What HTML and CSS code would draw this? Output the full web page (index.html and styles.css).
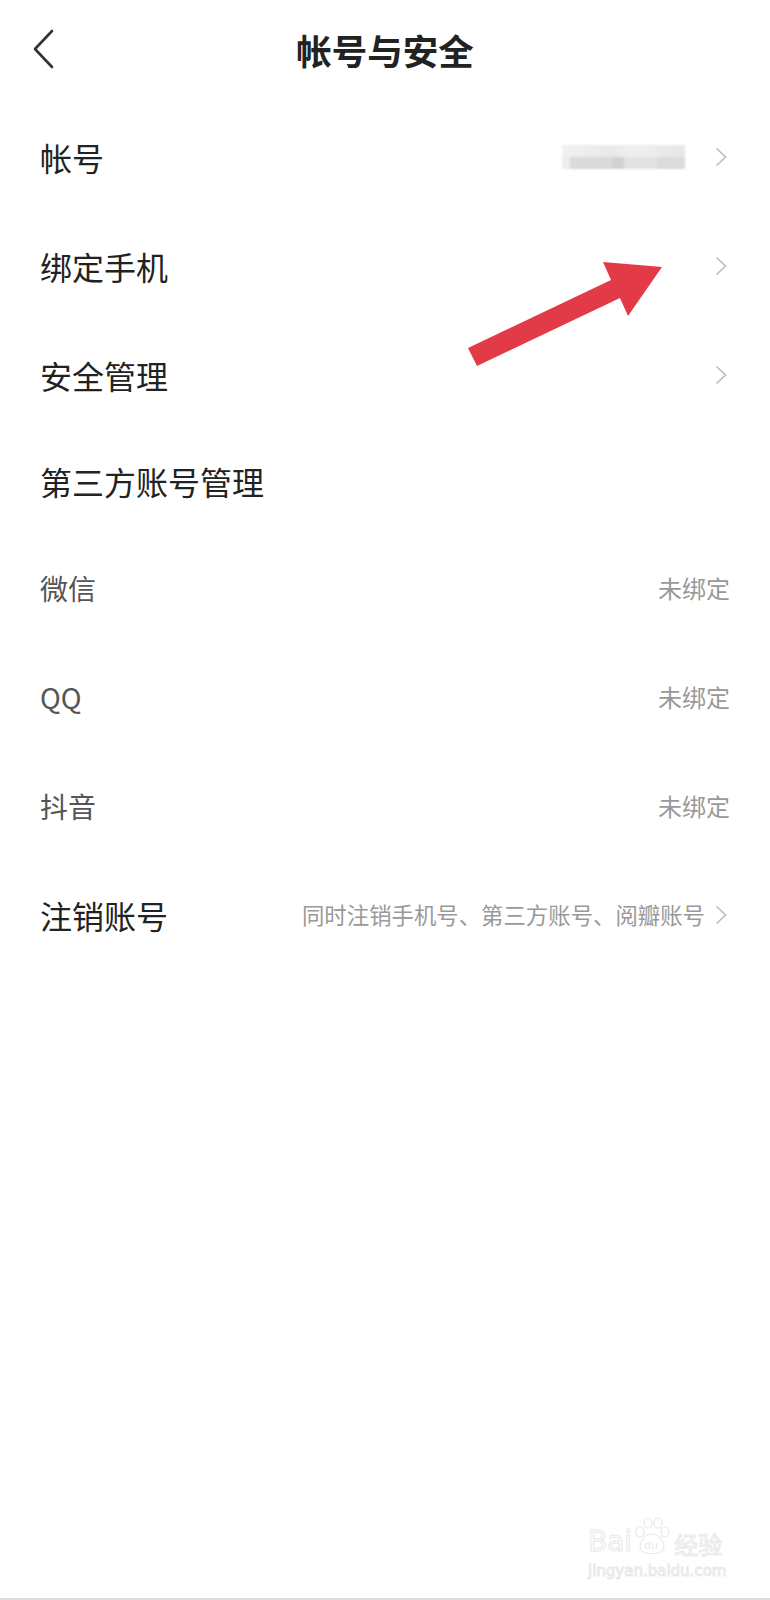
FILE: index.html
```html
<!DOCTYPE html>
<html lang="zh-CN">
<head>
    <meta charset="UTF-8">
    <meta name="viewport" content="width=device-width, initial-scale=1.0">
    <title>帐号与安全</title>
    <link rel="stylesheet" href="styles.css">
</head>
<body>
    <div class="page">
        <div class="header">
            <svg class="back" width="24" height="40" viewBox="0 0 24 40">
                <polyline points="20,2 3,20 20,38" fill="none" stroke="#333" stroke-width="2.6" stroke-linecap="round" stroke-linejoin="round"/>
            </svg>
            <h1>帐号与安全</h1>
        </div>

        <div class="row">
            <span class="label">帐号</span>
            <span class="value">
                <span class="masked"></span>
                <svg class="more" width="12" height="20" viewBox="0 0 12 20"><polyline points="1.5,1.5 10.5,10 1.5,18.5" fill="none" stroke="#bbb" stroke-width="1.6"/></svg>
            </span>
        </div>
        <div class="row">
            <span class="label">绑定手机</span>
            <span class="value">
                <svg class="more" width="12" height="20" viewBox="0 0 12 20"><polyline points="1.5,1.5 10.5,10 1.5,18.5" fill="none" stroke="#bbb" stroke-width="1.6"/></svg>
            </span>
        </div>
        <div class="row">
            <span class="label">安全管理</span>
            <span class="value">
                <svg class="more" width="12" height="20" viewBox="0 0 12 20"><polyline points="1.5,1.5 10.5,10 1.5,18.5" fill="none" stroke="#bbb" stroke-width="1.6"/></svg>
            </span>
        </div>

        <div class="row section">
            <span class="label">第三方账号管理</span>
        </div>
        <div class="row sub">
            <span class="label">微信</span>
            <span class="state">未绑定</span>
        </div>
        <div class="row sub">
            <span class="label">QQ</span>
            <span class="state">未绑定</span>
        </div>
        <div class="row sub">
            <span class="label">抖音</span>
            <span class="state">未绑定</span>
        </div>

        <div class="row">
            <span class="label">注销账号</span>
            <span class="value">
                <span class="note">同时注销手机号、第三方账号、阅瓣账号</span>
                <svg class="more" width="12" height="20" viewBox="0 0 12 20"><polyline points="1.5,1.5 10.5,10 1.5,18.5" fill="none" stroke="#bbb" stroke-width="1.6"/></svg>
            </span>
        </div>

        <!-- red arrow drawn over the list -->
        <svg class="arrow" width="210" height="120" viewBox="0 0 210 120">
            <polygon points="202,12 143,7 151,25 8,93 17,111 160,43 168,61" fill="#e23a46"/>
        </svg>

        <div class="watermark">
            <div class="wm-logo">
                <span>Bai</span>
                <svg width="40" height="40" viewBox="0 0 40 40">
                    <g fill="none" stroke="#e8e8e8" stroke-width="1.2">
                        <ellipse cx="8" cy="16" rx="4" ry="5"/>
                        <ellipse cx="16" cy="7" rx="4" ry="5"/>
                        <ellipse cx="26" cy="7" rx="4" ry="5"/>
                        <ellipse cx="33" cy="16" rx="4" ry="5"/>
                        <path d="M20 18 C12 18 6 28 9 34 C12 39 28 39 31 34 C34 28 28 18 20 18 Z"/>
                    </g>
                    <text x="12" y="33" font-size="11" fill="#e8e8e8">du</text>
                </svg>
                <span>经验</span>
            </div>
            <div class="wm-url">jingyan.baidu.com</div>
        </div>
    </div>
</body>
</html>
```

FILE: styles.css
```css
body {
    margin: 0;
    background: #fff;
    font-family: "Noto Sans CJK SC", "Noto Sans", sans-serif;
    color: #222;
}
.page {
    position: relative;
    width: 770px;
    height: 1600px;
    box-sizing: border-box;
    border-bottom: 2px solid #dcdcdc;
    overflow: hidden;
}
.header {
    position: relative;
    height: 102px;
    display: flex;
    align-items: center;
    justify-content: center;
}
.back {
    position: absolute;
    left: 32px;
    top: 29px;
}
.header h1 {
    margin: 0 0 2px;
    font-size: 35.5px;
    font-weight: 700;
    color: #222;
    line-height: 1;
}
.row {
    height: 109px;
    display: flex;
    align-items: center;
    justify-content: space-between;
    padding: 0 40px;
}
.label {
    font-size: 32px;
    line-height: 1;
    color: #222;
}
.section {
    height: 104px;
}
.sub .label {
    font-size: 28px;
    color: #555;
}
.state {
    font-size: 24px;
    line-height: 1;
    color: #999;
}
.value {
    display: flex;
    align-items: center;
}
.more {
    display: block;
    margin-right: 3px;
}
.note {
    font-size: 22.4px;
    line-height: 1;
    color: #999;
    margin-right: 10px;
}
.masked {
    display: block;
    width: 123px;
    height: 24px;
    margin-right: 30px;
    background:
        linear-gradient(to right, #ededed 0 8px, #dadada 8px 50px, #d2d2d2 50px 62px, #e2e2e2 62px 95px, #dbdbdb 95px 123px) bottom / 100% 12px no-repeat,
        linear-gradient(to right, #f1f1f1, #e9e9e9 40%, #efefef 60%, #e6e6e6) top / 100% 12px no-repeat;
    filter: blur(1px);
}
.arrow {
    position: absolute;
    left: 460px;
    top: 255px;
}
.watermark {
    position: absolute;
    left: 588px;
    top: 1514px;
    color: #fff;
    -webkit-text-stroke: 1px #e8e8e8;
}
.wm-logo {
    display: flex;
    align-items: flex-end;
    height: 42px;
    font-family: "DejaVu Sans", sans-serif;
    font-size: 28px;
    line-height: 1;
}
.wm-logo span:last-child {
    font-family: "Noto Sans CJK SC", sans-serif;
    font-size: 24px;
    margin-left: 2px;
}
.wm-url {
    font-family: "DejaVu Sans", sans-serif;
    font-size: 15px;
    margin-top: 6px;
}
```
